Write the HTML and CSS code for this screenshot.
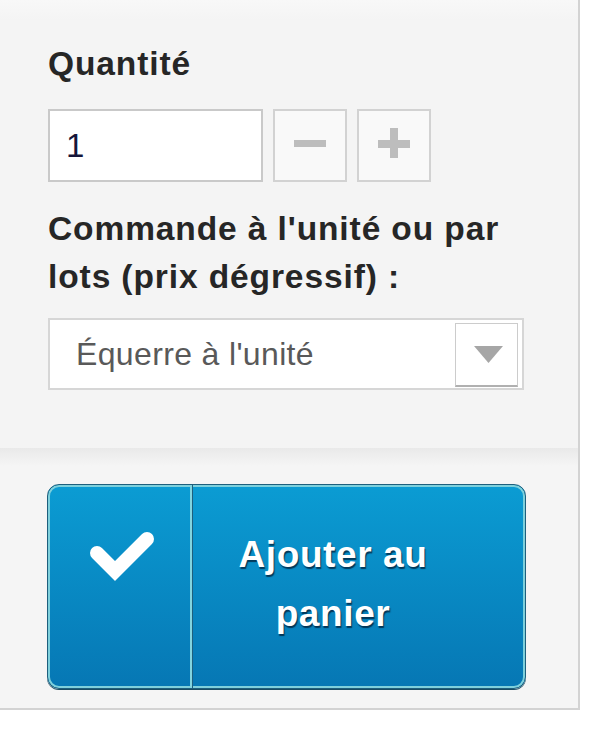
FILE: index.html
```html
<!DOCTYPE html>
<html lang="fr">
<head>
<meta charset="utf-8">
<title>Quantité</title>
<link rel="stylesheet" href="styles.css">
</head>
<body>
<div class="card">
  <div class="options">
    <div class="label">Quantité</div>
    <div class="qty-row">
      <input class="qty-input" type="text" value="1">
      <button class="qty-btn" type="button" aria-label="Diminuer">
        <svg width="32" height="32" viewBox="0 0 32 32"><rect x="0" y="12" width="32" height="7" fill="#bdbdbd"/></svg>
      </button>
      <button class="qty-btn" type="button" aria-label="Augmenter">
        <svg width="32" height="32" viewBox="0 0 32 32"><rect x="0" y="12" width="32" height="8" fill="#bdbdbd"/><rect x="12" y="0" width="8" height="30" fill="#bdbdbd"/></svg>
      </button>
    </div>
    <div class="label lots">Commande à l'unité ou par lots (prix dégressif) :</div>
    <div class="select">
      <span class="select-text">Équerre à l'unité</span>
      <span class="select-arrow">
        <svg width="29" height="17" viewBox="0 0 29 17"><polygon points="0,0 29,0 14.5,17" fill="#a6a6a6"/></svg>
      </span>
    </div>
  </div>
  <div class="actions">
    <button class="add-to-cart" type="button">
      <span class="cart-icon">
        <svg width="64" height="50" viewBox="0 0 64 50"><polyline points="7,22 25,40 57,8" fill="none" stroke="#ffffff" stroke-width="14" stroke-linecap="round" stroke-linejoin="miter"/></svg>
      </span>
      <span class="cart-text">Ajouter au panier</span>
    </button>
  </div>
</div>
</body>
</html>
```

FILE: styles.css
```css
html, body {
  margin: 0;
  padding: 0;
  background: #ffffff;
}

body {
  font-family: "Liberation Sans", Arial, sans-serif;
}

.card {
  width: 580px;
  box-sizing: border-box;
  border-right: 2px solid #d3d3d3;
  border-bottom: 2px solid #d3d3d3;
  background: #f4f4f4;
}

.options {
  height: 448px;
  box-sizing: border-box;
  padding: 44px 0 0 48px;
  background: linear-gradient(#f8f8f8, #f4f4f4 20px);
}

.label {
  font-size: 33.5px;
  line-height: 40px;
  font-weight: bold;
  letter-spacing: 0.9px;
  color: #262626;
}

.qty-row {
  display: flex;
  gap: 10px;
  margin-top: 25px;
  height: 73px;
}

.qty-input {
  width: 215px;
  height: 73px;
  box-sizing: border-box;
  margin: 0;
  border: 2px solid #c9c9c9;
  background: #ffffff;
  padding: 0 0 0 16px;
  font-family: "Liberation Sans", Arial, sans-serif;
  font-size: 33px;
  color: #16163a;
  outline: none;
}

.qty-btn {
  width: 74px;
  height: 73px;
  box-sizing: border-box;
  margin: 0;
  padding: 0;
  border: 2px solid #d2d2d2;
  background: #f9f9f9;
  display: flex;
  align-items: center;
  justify-content: center;
}

.qty-btn svg {
  display: block;
  margin-top: -4px;
}

.lots {
  width: 480px;
  line-height: 48px;
  margin-top: 23px;
}

.select {
  width: 476px;
  height: 72px;
  box-sizing: border-box;
  margin-top: 17px;
  border: 2px solid #d6d6d6;
  background: #ffffff;
  display: flex;
  align-items: center;
  padding-left: 26px;
}

.select-text {
  flex: 1;
  font-size: 32px;
  line-height: 40px;
  letter-spacing: 0.35px;
  color: #595959;
}

.select-arrow {
  align-self: flex-start;
  width: 63px;
  height: 64px;
  box-sizing: border-box;
  margin: 3px 4px 0 0;
  border: 1px solid #cccccc;
  border-bottom: 2px solid #b0b0b0;
  background: #ffffff;
  display: flex;
  align-items: center;
  justify-content: center;
}

.select-arrow svg {
  display: block;
  margin-left: 3px;
}

.actions {
  height: 260px;
  box-sizing: border-box;
  padding: 36px 0 0 47px;
  background: linear-gradient(#e9e9e9, #f5f5f5 18px);
}

.add-to-cart {
  width: 479px;
  height: 205px;
  box-sizing: border-box;
  margin: 0;
  padding: 0;
  display: flex;
  border: 1px solid #1d5f7d;
  border-radius: 12px;
  background: linear-gradient(#0b9cd3, #0677b4);
  box-shadow: inset 0 0 0 2px #7ed0dc, 0 1px 0 #1a4a60;
  overflow: hidden;
  font-family: "Liberation Sans", Arial, sans-serif;
}

.cart-icon {
  width: 144px;
  height: 100%;
  box-sizing: border-box;
  border-right: 2px solid #82d4df;
  display: flex;
  justify-content: center;
  align-items: flex-start;
  padding: 46px 0 0 6px;
}

.cart-icon svg {
  display: block;
  overflow: visible;
}

.cart-text {
  flex: 1;
  height: 100%;
  box-sizing: border-box;
  border-left: 1px solid #1d5f7d;
  display: flex;
  align-items: center;
  justify-content: center;
  padding: 0 62px 5px 10px;
  text-align: center;
  font-size: 37px;
  line-height: 59px;
  font-weight: bold;
  letter-spacing: 0.6px;
  color: #ffffff;
  text-shadow: 1px 2px 1px rgba(0, 30, 55, 0.75);
}
```
